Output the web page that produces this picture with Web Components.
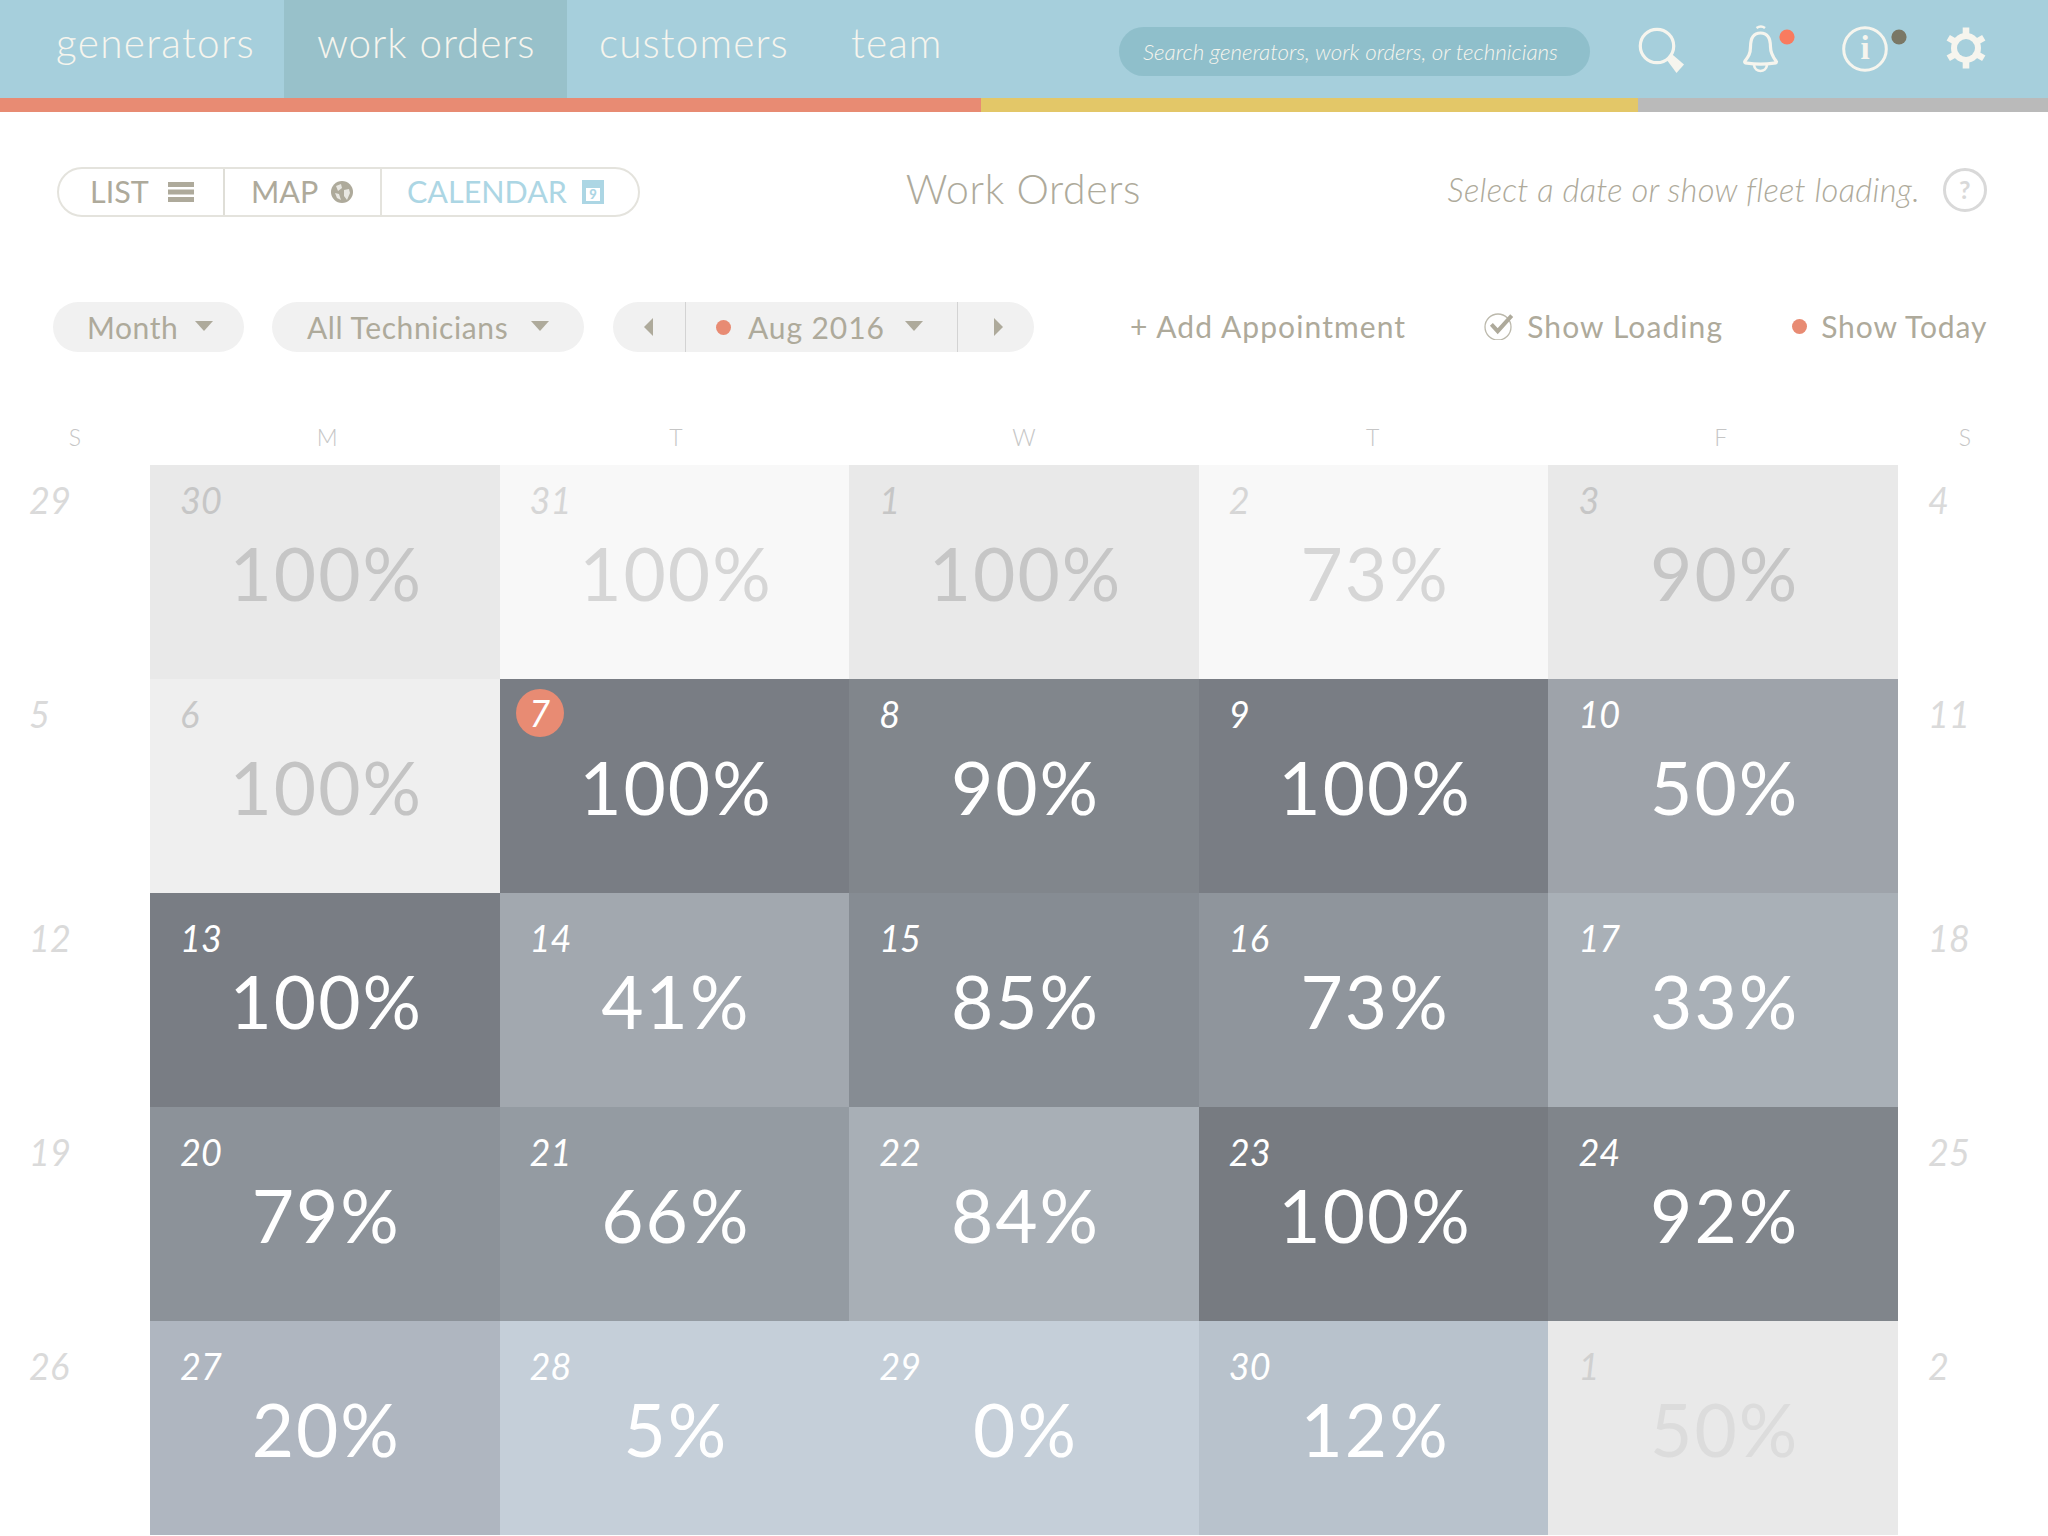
<!DOCTYPE html>
<html>
<head>
<meta charset="utf-8">
<title>Work Orders</title>
<style>
html, body { margin: 0; padding: 0; background: #fff; }
body { font-family: Lato, "Open Sans", sans-serif; width: 2048px; height: 1536px; overflow: hidden; }
</style>
</head>
<body>
<app-nav></app-nav>
<page-head></page-head>
<filter-bar></filter-bar>
<cal-grid>
  <side-date>29</side-date>
  <cal-cell date="30" style="--bg:#e9e9e9;--fg:#c6c6c6;--dc:#c6c6c6">100%</cal-cell>
  <cal-cell date="31" style="--bg:#f8f8f8;--fg:#d6d6d6;--dc:#d6d6d6">100%</cal-cell>
  <cal-cell date="1" style="--bg:#e9e9e9;--fg:#c6c6c6;--dc:#c6c6c6">100%</cal-cell>
  <cal-cell date="2" style="--bg:#f8f8f8;--fg:#d6d6d6;--dc:#d6d6d6">73%</cal-cell>
  <cal-cell date="3" style="--bg:#e9e9e9;--fg:#c6c6c6;--dc:#c6c6c6">90%</cal-cell>
  <side-date end>4</side-date>

  <side-date>5</side-date>
  <cal-cell date="6" style="--bg:#efefef;--fg:#c4c4c4;--dc:#c8c8c8">100%</cal-cell>
  <cal-cell date="7" today style="--bg:#797d84">100%</cal-cell>
  <cal-cell date="8" style="--bg:#81868c">90%</cal-cell>
  <cal-cell date="9" style="--bg:#797d84">100%</cal-cell>
  <cal-cell date="10" style="--bg:#9ea3aa">50%</cal-cell>
  <side-date end>11</side-date>

  <side-date low>12</side-date>
  <cal-cell low date="13" style="--bg:#797d84">100%</cal-cell>
  <cal-cell low date="14" style="--bg:#a2a8af">41%</cal-cell>
  <cal-cell low date="15" style="--bg:#868c93">85%</cal-cell>
  <cal-cell low date="16" style="--bg:#8f959c">73%</cal-cell>
  <cal-cell low date="17" style="--bg:#a9b0b7">33%</cal-cell>
  <side-date low end>18</side-date>

  <side-date low>19</side-date>
  <cal-cell low date="20" style="--bg:#8c9299">79%</cal-cell>
  <cal-cell low date="21" style="--bg:#949ba2">66%</cal-cell>
  <cal-cell low date="22" style="--bg:#a8afb6">84%</cal-cell>
  <cal-cell low date="23" style="--bg:#777b81">100%</cal-cell>
  <cal-cell low date="24" style="--bg:#80858b">92%</cal-cell>
  <side-date low end>25</side-date>

  <side-date low>26</side-date>
  <cal-cell low date="27" style="--bg:#afb6c0">20%</cal-cell>
  <cal-cell low date="28" style="--bg:#c5cfd9">5%</cal-cell>
  <cal-cell low date="29" style="--bg:#c5cfd9">0%</cal-cell>
  <cal-cell low date="30" style="--bg:#b8c2cc">12%</cal-cell>
  <cal-cell low date="1" style="--bg:#e9e9e9;--fg:#dcdcdc;--dc:#d0d0d0">50%</cal-cell>
  <side-date low end>2</side-date>
</cal-grid>

<script>
// top bar with tabs, search and icons
var template_nav = document.createElement("template");
template_nav.innerHTML = `
<style>
:host { display: block; font-family: Lato, sans-serif; }
.bar { display: flex; height: 98px; background: #a6cfdc; color: #f6f5ee; }
.tab { display: flex; align-items: center; height: 98px; font-size: 40.5px; font-weight: 300; letter-spacing: 1.1px; padding-bottom: 13px; box-sizing: border-box; }
.t1 { padding-left: 56px; width: 284px; letter-spacing: 1.3px; }
.t2 { padding-left: 33px; width: 283px; background: #98c1ca; letter-spacing: .9px; }
.t3 { padding-left: 32px; width: 284px; }
.t4 { width: 120px; }
.search { width: 471px; height: 49px; margin: 27px 0 0 148px; border-radius: 25px; background: #8fbfcb; box-sizing: border-box; padding-left: 24px; font-size: 22.4px; font-weight: 300; font-style: italic; line-height: 49px; white-space: nowrap; }
svg { display: block; flex: none; }
.strip { display: flex; height: 14px; }
.strip i { display: block; }
</style>
<div class="bar">
  <div class="tab t1">generators</div>
  <div class="tab t2">work orders</div>
  <div class="tab t3">customers</div>
  <div class="tab t4">team</div>
  <div class="search">Search generators, work orders, or technicians</div>
  <svg style="margin:20px 0 0 41px" width="60" height="60" viewBox="0 0 60 60">
    <circle cx="26" cy="26" r="16.7" fill="none" stroke="#f6f5ee" stroke-width="3.2"/>
    <path d="M38 37.5 L43 31.8 L55.5 42.5 L48 51 Z" transform="translate(-2.5 2)" fill="#f6f5ee"/>
  </svg>
  <svg style="margin:20px 0 0 43px" width="70" height="60" viewBox="0 0 70 60">
    <path d="M22.5 8 Q27 5 31 8" fill="none" stroke="#f6f5ee" stroke-width="2.6"/>
    <path d="M26.5 13 C18 13 16.5 20 16.5 27 C16.5 34 14 37 11 41 C10 42.5 11 43 13 43.2 C22 44.5 31 44.5 40 43.2 C42.5 43 43 42 42 41 C39 37 36.5 33 36.5 27 C36.5 20 35 13 26.5 13 Z" fill="none" stroke="#f6f5ee" stroke-width="3.2" stroke-linejoin="round"/>
    <path d="M20 45 C21 53 32 53 33 45" fill="none" stroke="#f6f5ee" stroke-width="2.6"/>
    <circle cx="53" cy="17" r="7.6" fill="#f97b5f"/>
  </svg>
  <svg style="margin:20px 0 0 28px" width="80" height="60" viewBox="0 0 80 60">
    <circle cx="33" cy="29" r="21.3" fill="none" stroke="#f6f5ee" stroke-width="3"/>
    <text x="33" y="39" text-anchor="middle" font-family="Liberation Serif" font-weight="700" font-size="33" fill="#f6f5ee">i</text>
    <circle cx="67" cy="17" r="7.6" fill="#7a7866"/>
  </svg>
  <svg style="margin:20px 0 0 26px" width="56" height="56" viewBox="0 0 56 56">
    <g fill="#f6f5ee">
      <rect x="24.7" y="7.5" width="6.6" height="41" />
      <rect x="24.7" y="7.5" width="6.6" height="41" transform="rotate(60 28 28)"/>
      <rect x="24.7" y="7.5" width="6.6" height="41" transform="rotate(120 28 28)"/>
    </g>
    <circle cx="28" cy="28" r="15" fill="#f6f5ee"/>
    <circle cx="28" cy="28" r="9" fill="#a6cfdc"/>
  </svg>
</div>
<div class="strip">
  <i style="width:981px;background:#e88b73"></i>
  <i style="width:657px;background:#e3c768"></i>
  <i style="flex:1;background:#bababa"></i>
</div>
`;
class AppNav extends HTMLElement {
    constructor(){
        super();
        this.attachShadow({mode:"open"});
    }
    connectedCallback(){
        this.shadowRoot.appendChild(template_nav.content.cloneNode(true));
    }
}
customElements.define("app-nav", AppNav);

// list / map / calendar switch and the title line
var template_head = document.createElement("template");
template_head.innerHTML = `
<style>
:host { display: block; font-family: Lato, sans-serif; color: #aeaa9b; }
.row { display: grid; grid-template-columns: 1fr auto 1fr; align-items: center; padding: 55px 61px 0 57px; height: 50px; }
.switch { display: flex; width: 583px; height: 50px; box-sizing: border-box; border: 2px solid #e4e3dd; border-radius: 25px; font-size: 30.5px; font-weight: 400; }
.seg { display: flex; align-items: center; box-sizing: border-box; height: 46px; padding-bottom: 3px; }
.seg svg { margin-top: 3px; }
.list { width: 166px; padding-left: 31px; border-right: 2px solid #dfded7; }
.map { width: 157px; padding-left: 26px; border-right: 2px solid #e4e3dd; }
.cal { flex: 1; padding-left: 25px; color: #acd6e4; }
.title { font-size: 41px; font-weight: 300; letter-spacing: .6px; margin: -7px 0 0 3px; }
.hint { display: flex; align-items: center; justify-content: flex-end; margin-top: -4px; font-size: 32.7px; font-weight: 300; font-style: italic; letter-spacing: .3px; }
.hint span { padding-bottom: 2px; }
svg { display: block; flex: none; }
</style>
<div class="row">
  <div class="switch">
    <div class="seg list">LIST<svg style="margin-left:19px" width="26" height="20" viewBox="0 0 26 20"><path d="M0 0h26v5H0zM0 7.5h26v5H0zM0 15h26v5H0z" fill="#aeaa9b"/></svg></div>
    <div class="seg map">MAP<svg style="margin-left:13px" width="22" height="22" viewBox="0 0 22 22"><circle cx="11" cy="11" r="11" fill="#aeaa9b"/><path d="M5 5 L10 3 L11 7 L7 10 Z M13 9 L18 8 L19 12 L16 19 L13 15 Z M4 12 L8 13 L10 19 L6 17 Z" fill="#e8e7e2"/></svg></div>
    <div class="seg cal">CALENDAR<svg style="margin-left:15px" width="22" height="24" viewBox="0 0 22 24"><rect width="22" height="24" fill="#acd6e4"/><rect x="4" y="8" width="14" height="13" fill="#fff"/><text x="11" y="19" text-anchor="middle" font-family="Lato" font-weight="900" font-size="13" fill="#acd6e4">9</text></svg></div>
  </div>
  <div class="title">Work Orders</div>
  <div class="hint"><span>Select a date or show fleet loading.</span>
    <svg style="margin-left:23px" width="44" height="44" viewBox="0 0 44 44"><circle cx="22" cy="22" r="20.5" fill="none" stroke="#d9d9d9" stroke-width="3"/><text x="22" y="31" text-anchor="middle" font-family="Lato" font-weight="700" font-style="normal" font-size="25" fill="#d9d9d9">?</text></svg>
  </div>
</div>
`;
class PageHead extends HTMLElement {
    constructor(){
        super();
        this.attachShadow({mode:"open"});
    }
    connectedCallback(){
        this.shadowRoot.appendChild(template_head.content.cloneNode(true));
    }
}
customElements.define("page-head", PageHead);

// the grey rounded dropdowns and the actions on the right
var template_filter = document.createElement("template");
template_filter.innerHTML = `
<style>
:host { display: block; font-family: Lato, sans-serif; color: #aeaa9b; }
.row { display: flex; align-items: center; margin-top: 85px; padding-left: 53px; height: 50px; font-size: 30px; font-weight: 400; letter-spacing: .6px; }
.pill { display: flex; align-items: center; box-sizing: border-box; height: 50px; border-radius: 25px; background: #f1f1f1; }
.month { width: 191px; padding-left: 34px; }
.tech { width: 312px; padding-left: 35px; margin-left: 28px; }
.date { width: 421px; margin-left: 29px; }
.date .prev { width: 73px; height: 50px; border-right: 1px solid #d3d3d3; display: flex; align-items: center; padding-left: 31px; box-sizing: border-box; }
.date .mid { width: 272px; height: 50px; border-right: 1px solid #d3d3d3; display: flex; align-items: center; padding-left: 30px; box-sizing: border-box; letter-spacing: .9px; }
.date .next { flex: 1; padding-left: 36px; box-sizing: border-box; }
.caret { width: 0; height: 0; border-left: 9px solid transparent; border-right: 9px solid transparent; border-top: 10px solid #aeaa9b; margin-bottom: 3px; }
.dot { width: 15px; height: 15px; border-radius: 50%; background: #e88b73; flex: none; }
.act { display: flex; align-items: center; margin-top: -2px; white-space: nowrap; letter-spacing: 1.1px; }
svg { display: block; flex: none; }
</style>
<div class="row">
  <div class="pill month">Month<span class="caret" style="margin-left:17px"></span></div>
  <div class="pill tech">All Technicians<span class="caret" style="margin-left:23px"></span></div>
  <div class="pill date">
    <div class="prev"><svg width="9" height="18" viewBox="0 0 9 18"><path d="M9 0V18L0 9Z" fill="#aeaa9b"/></svg></div>
    <div class="mid"><span class="dot" style="margin-right:17px"></span>Aug 2016<span class="caret" style="margin-left:20px"></span></div>
    <div class="next"><svg width="9" height="18" viewBox="0 0 9 18"><path d="M0 0V18L9 9Z" fill="#aeaa9b"/></svg></div>
  </div>
  <div class="act" style="margin-left:96px">+ Add Appointment</div>
  <div class="act" style="margin-left:78px">
    <svg style="margin-right:13px" width="30" height="28" viewBox="0 0 30 28"><circle cx="14" cy="15" r="13" fill="none" stroke="#bcb9ac" stroke-width="1.3"/><path d="M7.4 12.4 L13.7 19.2 L27.7 3.7" fill="none" stroke="#aeaa9b" stroke-width="4"/></svg>
    Show Loading
  </div>
  <div class="act" style="margin-left:69px;letter-spacing:.9px"><span class="dot" style="margin-right:14px"></span>Show Today</div>
</div>
`;
class FilterBar extends HTMLElement {
    constructor(){
        super();
        this.attachShadow({mode:"open"});
    }
    connectedCallback(){
        this.shadowRoot.appendChild(template_filter.content.cloneNode(true));
    }
}
customElements.define("filter-bar", FilterBar);

// weekday letters and a 7 column grid, the cells are slotted in
var template_grid = document.createElement("template");
template_grid.innerHTML = `
<style>
:host { display: block; font-family: Lato, sans-serif; }
.days, .cells { display: grid; grid-template-columns: 150px repeat(5, 1fr) 150px; }
.days { height: 113px; box-sizing: border-box; padding-top: 72px; font-size: 23px; font-weight: 300; line-height: 26px; color: #c6c6c6; text-align: center; }
.cells { grid-auto-rows: 214px; }
</style>
<div class="days"><div>S</div><div style="padding-left:5px">M</div><div style="padding-left:3px">T</div><div>W</div><div style="padding-right:2px">T</div><div style="padding-right:5px">F</div><div style="padding-right:16px">S</div></div>
<div class="cells"><slot></slot></div>
`;
class CalGrid extends HTMLElement {
    constructor(){
        super();
        this.attachShadow({mode:"open"});
    }
    connectedCallback(){
        this.shadowRoot.appendChild(template_grid.content.cloneNode(true));
    }
}
customElements.define("cal-grid", CalGrid);

// one day of the month
var template_cell = document.createElement("template");
template_cell.innerHTML = `
<style>
:host { display: grid; background: var(--bg); color: var(--fg, #fff); font-family: Lato, sans-serif; overflow: hidden; }
.date, .pct { grid-area: 1 / 1; }
.date { align-self: start; justify-self: start; margin: 15px 0 0 30px; font-size: 36px; font-weight: 400; font-style: italic; line-height: 40px; color: var(--dc, #fff); }
:host([low]) .date { margin-top: 25px; }
:host([today]) .date { margin: 10px 0 0 16px; width: 48px; height: 48px; line-height: 48px; border-radius: 50%; background: #e88b73; text-align: center; }
.pct { align-self: center; justify-self: center; margin: 1px 0 0 3px; font-size: 73px; font-weight: 400; letter-spacing: 2px; line-height: 90px; }
</style>
<span class="date"></span>
<span class="pct"><slot></slot></span>
`;
class CalCell extends HTMLElement {
    constructor(){
        super();
        this.attachShadow({mode:"open"});
    }
    connectedCallback(){
        this.shadowRoot.appendChild(template_cell.content.cloneNode(true));
        this.shadowRoot.querySelector(".date").innerText = this.getAttribute("date");
    }
}
customElements.define("cal-cell", CalCell);

// weekend numbers out on the white sides
var template_side = document.createElement("template");
template_side.innerHTML = `
<style>
:host { display: block; box-sizing: border-box; padding: 15px 0 0 29px; font-family: Lato, sans-serif; font-size: 36px; font-weight: 400; font-style: italic; line-height: 40px; color: #dadada; }
:host([low]) { padding-top: 25px; }
:host([end]) { padding-left: 30px; }
</style>
<slot></slot>
`;
class SideDate extends HTMLElement {
    constructor(){
        super();
        this.attachShadow({mode:"open"});
    }
    connectedCallback(){
        this.shadowRoot.appendChild(template_side.content.cloneNode(true));
    }
}
customElements.define("side-date", SideDate);
</script>
</body>
</html>
